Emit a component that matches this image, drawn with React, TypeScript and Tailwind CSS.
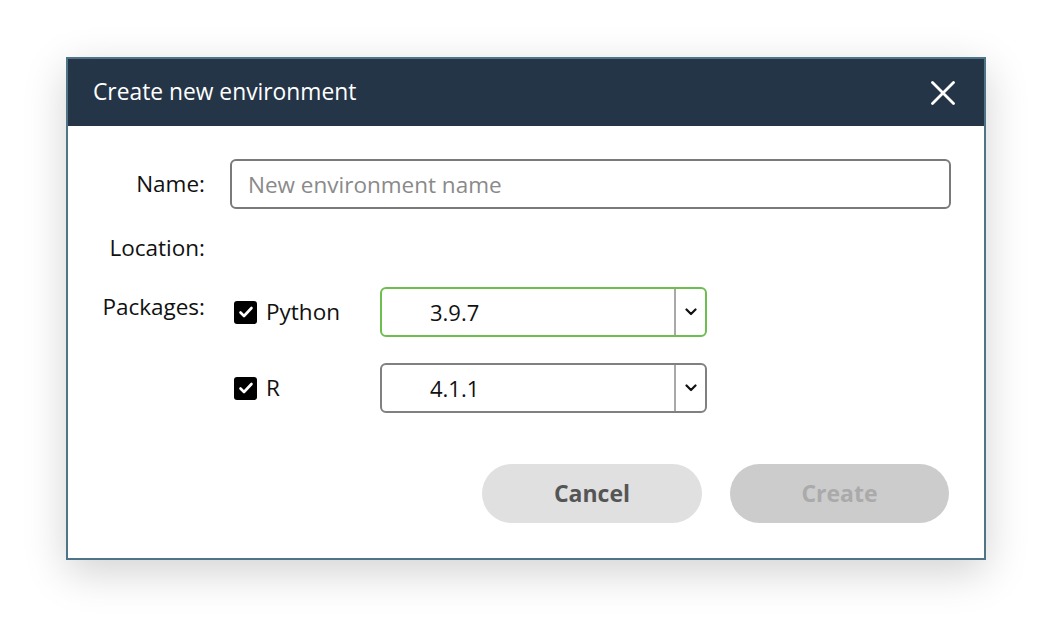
import React, { useState } from "react";

const font = { fontFamily: '"Open Sans", "Noto Sans", sans-serif' };

function Check({ checked, onClick }: { checked: boolean; onClick: () => void }) {
  return (
    <button
      type="button"
      onClick={onClick}
      className="flex h-[23px] w-[23px] items-center justify-center rounded-[3px] bg-black"
    >
      {checked && (
        <svg width="16" height="16" viewBox="0 0 16 16" fill="none">
          <path d="M2.5 8.5l3.5 3.5 7.5-8" stroke="white" strokeWidth="2.6" strokeLinecap="round" strokeLinejoin="round" />
        </svg>
      )}
    </button>
  );
}

function Select({ value, active }: { value: string; active?: boolean }) {
  return (
    <div
      className={
        "flex h-[50px] w-[327px] items-stretch rounded-[6px] border-2 " +
        (active ? "border-[#6cbf4f]" : "border-[#808080]")
      }
    >
      <div className="flex flex-1 items-center pl-[48px] text-[22px] text-[#111]">{value}</div>
      <div className="w-[2px] bg-[#a9a9a9]" />
      <div className="flex w-[29px] items-center justify-center">
        <svg width="12" height="8" viewBox="0 0 12 8" fill="none">
          <path d="M1.5 1.5l4.5 4.5 4.5-4.5" stroke="#111" strokeWidth="2.2" strokeLinecap="round" strokeLinejoin="round" />
        </svg>
      </div>
    </div>
  );
}

export default function App() {
  const [python, setPython] = useState(true);
  const [r, setR] = useState(true);
  const [name, setName] = useState("");

  return (
    <div className="flex h-[634px] w-[1052px] justify-center bg-white pt-[57px]" style={font}>
      <div className="flex h-[503px] w-[920px] flex-col border-2 border-[#4f7387] bg-white shadow-[0_12px_40px_rgba(0,0,0,0.18)]">
        <div className="flex h-[67px] items-center justify-between bg-[#243547] pl-[25px] pr-[28px]">
          <h1 className="text-[22.8px] text-white">Create new environment</h1>
          <button type="button" className="flex h-[26px] w-[26px] items-center justify-center">
            <svg width="24" height="24" viewBox="0 0 24 24" fill="none">
              <path d="M1.5 1.5l21 21M22.5 1.5l-21 21" stroke="white" strokeWidth="2.8" strokeLinecap="round" />
            </svg>
          </button>
        </div>

        <div className="flex flex-1 flex-col pr-[33px] pt-[33px] text-[22.5px] text-[#111]">
          <div className="flex items-center">
            <label htmlFor="env-name" className="w-[137px] text-right">Name:</label>
            <input
              id="env-name"
              value={name}
              onChange={(e) => setName(e.target.value)}
              placeholder="New environment name"
              className="ml-[25px] h-[50px] flex-1 rounded-[6px] border-2 border-[#7a7a7a] px-[16px] text-[22.5px] outline-none placeholder:text-[#8a8a8a]"
            />
          </div>

          <div className="mt-[27px] flex h-[24px] items-center">
            <span className="w-[137px] text-right leading-[24px]">Location:</span>
          </div>

          <div className="mt-[27px] flex items-start">
            <span className="w-[137px] pt-[8px] text-right leading-[24px]">Packages:</span>
            <div className="ml-[25px] flex flex-col gap-[26px]">
              <div className="flex items-center">
                <div className="ml-[4px] flex w-[146px] items-center gap-[9px]">
                  <Check checked={python} onClick={() => setPython(!python)} />
                  <span>Python</span>
                </div>
                <Select value="3.9.7" active />
              </div>
              <div className="flex items-center">
                <div className="ml-[4px] flex w-[146px] items-center gap-[9px]">
                  <Check checked={r} onClick={() => setR(!r)} />
                  <span>R</span>
                </div>
                <Select value="4.1.1" />
              </div>
            </div>
          </div>

          <div className="mt-[51px] flex justify-end gap-[28px] pr-[2px]">
            <button type="button" className="h-[59px] w-[220px] rounded-full bg-[#e0e0e0] text-[23px] font-bold text-[#555]">
              Cancel
            </button>
            <button type="button" disabled className="h-[59px] w-[219px] rounded-full bg-[#cccccc] text-[23px] font-bold text-[#aaaaaa]">
              Create
            </button>
          </div>
        </div>
      </div>
    </div>
  );
}
